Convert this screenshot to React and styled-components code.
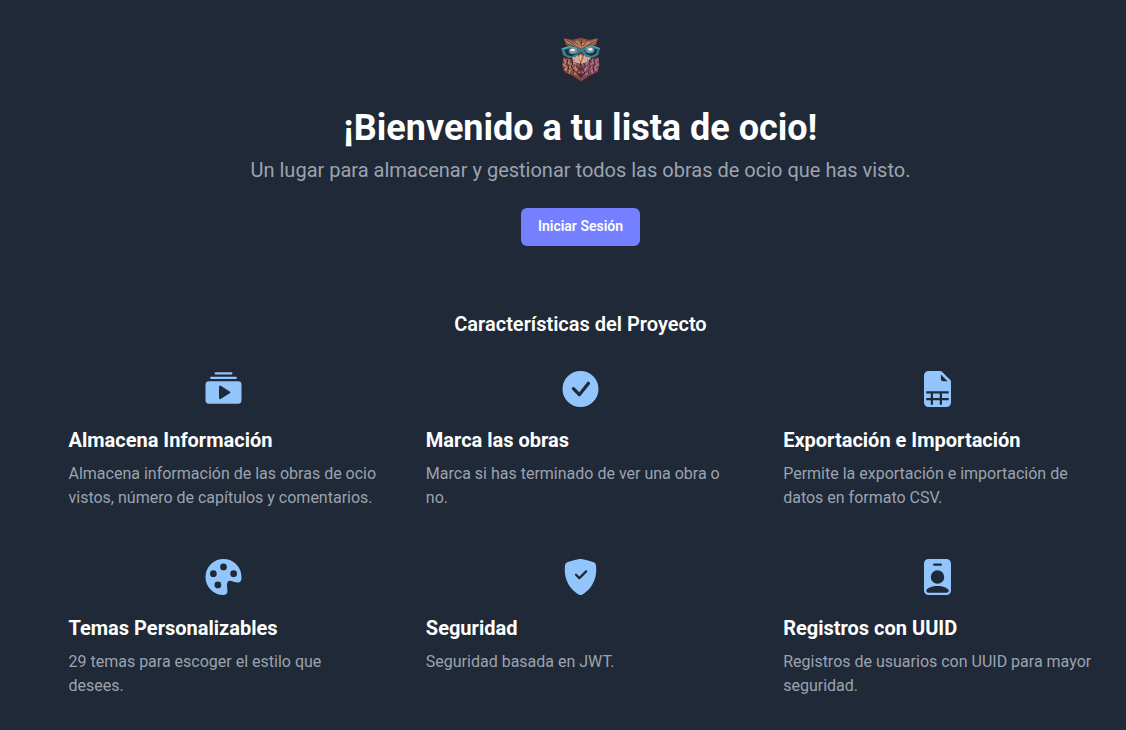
import React from "react";
import styled, { createGlobalStyle } from "styled-components";
import {
  BsCollectionPlayFill,
  BsCheckCircleFill,
  BsFileEarmarkSpreadsheetFill,
  BsPaletteFill,
  BsShieldFillCheck,
  BsPersonBadgeFill,
} from "react-icons/bs";

const GlobalStyle = createGlobalStyle`
  *, *::before, *::after { box-sizing: border-box; }
  body {
    margin: 0;
    background: #1f2937;
    font-family: Roboto, sans-serif;
    line-height: 24px;
    overflow: hidden;
  }
  h1, h2, h3, p { margin: 0; }
`;

const Page = styled.main`
  min-height: 730px;
  padding: 30px 0 0 35px;
  display: flex;
  flex-direction: column;
  align-items: center;
  color: #fff;
`;

const Hero = styled.header`
  display: flex;
  flex-direction: column;
  align-items: center;
  text-align: center;
`;

const Logo = styled.svg`
  width: 61px;
  height: 60px;
  margin-bottom: 18px;
`;

const Title = styled.h1`
  font-size: 36px;
  line-height: 40px;
  font-weight: 700;
`;

const Subtitle = styled.p`
  margin-top: 8px;
  font-size: 20px;
  line-height: 28px;
  color: #9ca3af;
`;

const LoginButton = styled.button`
  margin-top: 24px;
  width: 119px;
  height: 38px;
  padding: 0 0 3px;
  border: 0;
  border-radius: 6px;
  background: #7480ff;
  color: #fff;
  font: 600 14px/20px Roboto, sans-serif;
`;

const SectionTitle = styled.h2`
  margin-top: 64px;
  font-size: 20px;
  line-height: 28px;
  font-weight: 600;
`;

const Features = styled.section`
  width: 1024px;
  margin-top: 33px;
  display: grid;
  grid-template-columns: repeat(3, 1fr);
  gap: 48px;
`;

const Feature = styled.article`
  display: flex;
  flex-direction: column;

  > svg {
    align-self: center;
    width: 37px;
    height: 36px;
    margin-bottom: 19px;
    color: #93c5fd;
  }
`;

const FeatureTitle = styled.h3`
  margin-bottom: 8px;
  font-size: 20px;
  line-height: 28px;
  font-weight: 700;
`;

const FeatureText = styled.p`
  min-height: 49px;
  font-size: 16px;
  color: #9ca3af;
`;

const features = [
  [BsCollectionPlayFill, "Almacena Información", "Almacena información de las obras de ocio vistos, número de capítulos y comentarios."],
  [BsCheckCircleFill, "Marca las obras", "Marca si has terminado de ver una obra o no."],
  [BsFileEarmarkSpreadsheetFill, "Exportación e Importación", "Permite la exportación e importación de datos en formato CSV."],
  [BsPaletteFill, "Temas Personalizables", "29 temas para escoger el estilo que desees."],
  [BsShieldFillCheck, "Seguridad", "Seguridad basada en JWT."],
  [BsPersonBadgeFill, "Registros con UUID", "Registros de usuarios con UUID para mayor seguridad."],
];

function OwlLogo() {
  return (
    <Logo viewBox="0 0 183 180" aria-hidden="true">
      {/* Silhouette */}
      <path d="M41 24 62 28 92 22 124 28 144 24 143 47 151 62 145 83 150 98 147 120 136 133 120 140 106 151 93 158 80 151 67 140 49 134 37 119 34 98 39 82 34 58 44 47Z" fill="#3b232c" />
      {/* Brow and ear tufts */}
      <path d="M41 25 67 30 92 24 118 30 144 25 137 45 119 48 101 55 93 64 85 55 68 49 49 46Z" fill="#8b5848" />
      <path d="m45 28 22 7 17-3 9 13 10-14 18 5 19-9-8 13-21 5-18 10-19-11-20-4Z" fill="#c28a6b" />
      <path d="m51 31 19 11m1-11 17 16m6-20v23m20-19-15 17m36-15-20 11M62 28l15 15m32-13-9 9" stroke="#5d352f" strokeWidth="3" fill="none" />
      {/* Breast, warm on the left and violet on the right */}
      <path d="M40 82 60 88 91 94 93 154 70 137 45 127 37 107Z" fill="#814c46" />
      <path d="m146 82-21 6-32 6v60l24-17 26-12 5-20Z" fill="#7e4a5e" />
      <path d="m65 83 20-9 7 23 10-23 22 9-13 13-18 6-19-5Z" fill="#d4aaa0" />
      <path d="m41 88 9 9-9 7 11 7-7 8 15 2-3 10m1-44-3 12 13 6-10 7 13 5-2 9m4-38-4 11 14 5-9 9 12 5m-19 8 13 8m-4-16 13 11" stroke="#c7886d" strokeWidth="4" fill="none" />
      <path d="m144 88-9 9 9 7-11 7 7 8-15 2 3 10m-1-44 3 12-13 6 10 7-13 5 2 9m-4-38 4 11-14 5 9 9-12 5m19 8-13 8m4-16-13 11" stroke="#b77583" strokeWidth="4" fill="none" />
      <path d="m54 90-5 13 7 8-3 13m12-34 3 11-5 10 8 7-2 13m14-31-4 10 7 8-5 12 12 12m38-52 5 13-7 8 3 13m-12-34-3 11 5 10-8 7 2 13m-14-31 4 10-7 8 5 12-12 12m0-52v17m-6 5 6 9 6-9m-11 17 5 10 5-10" stroke="#351f2b" strokeWidth="3" fill="none" />
      {/* Glasses */}
      <path d="m34 55 24-8 22 5 13 8 13-8 21-6 23 8-5 20-16 9-21-2-14-15-7 2-10 13-21 3-17-9Z" fill="#328391" />
      <path d="m43 60 20-5 20 6-4 12-15 6-14-4Zm60 0 20-7 20 6-6 13-14 6-14-6Z" fill="#1e303b" />
      <ellipse cx="69" cy="63" rx="13" ry="9" fill="#7597a2" />
      <ellipse cx="120" cy="61" rx="13" ry="9" fill="#7597a2" />
      <ellipse cx="68" cy="60" rx="7" ry="4" fill="#edf3ec" />
      <ellipse cx="121" cy="58" rx="7" ry="4" fill="#edf3ec" />
      <path d="M36 57 58 50 79 55m28-1 20-6 22 8" stroke="#60b3b8" strokeWidth="3" fill="none" />
      {/* Beak */}
      <path d="m87 73 6-4 6 5 2 9-9 15-6-14Z" fill="#b96947" />
      <path d="m91 74 4 4-3 15-4-10Z" fill="#ffd095" />
    </Logo>
  );
}

export default function App() {
  return (
    <>
      <GlobalStyle />
      <Page>
        <Hero>
          <OwlLogo />
          <Title>¡Bienvenido a tu lista de ocio!</Title>
          <Subtitle>Un lugar para almacenar y gestionar todos las obras de ocio que has visto.</Subtitle>
          <LoginButton>Iniciar Sesión</LoginButton>
        </Hero>
        <SectionTitle>Características del Proyecto</SectionTitle>
        <Features>
          {features.map(([Icon, title, text]) => (
            <Feature key={title}>
              <Icon />
              <FeatureTitle>{title}</FeatureTitle>
              <FeatureText>{text}</FeatureText>
            </Feature>
          ))}
        </Features>
      </Page>
    </>
  );
}
